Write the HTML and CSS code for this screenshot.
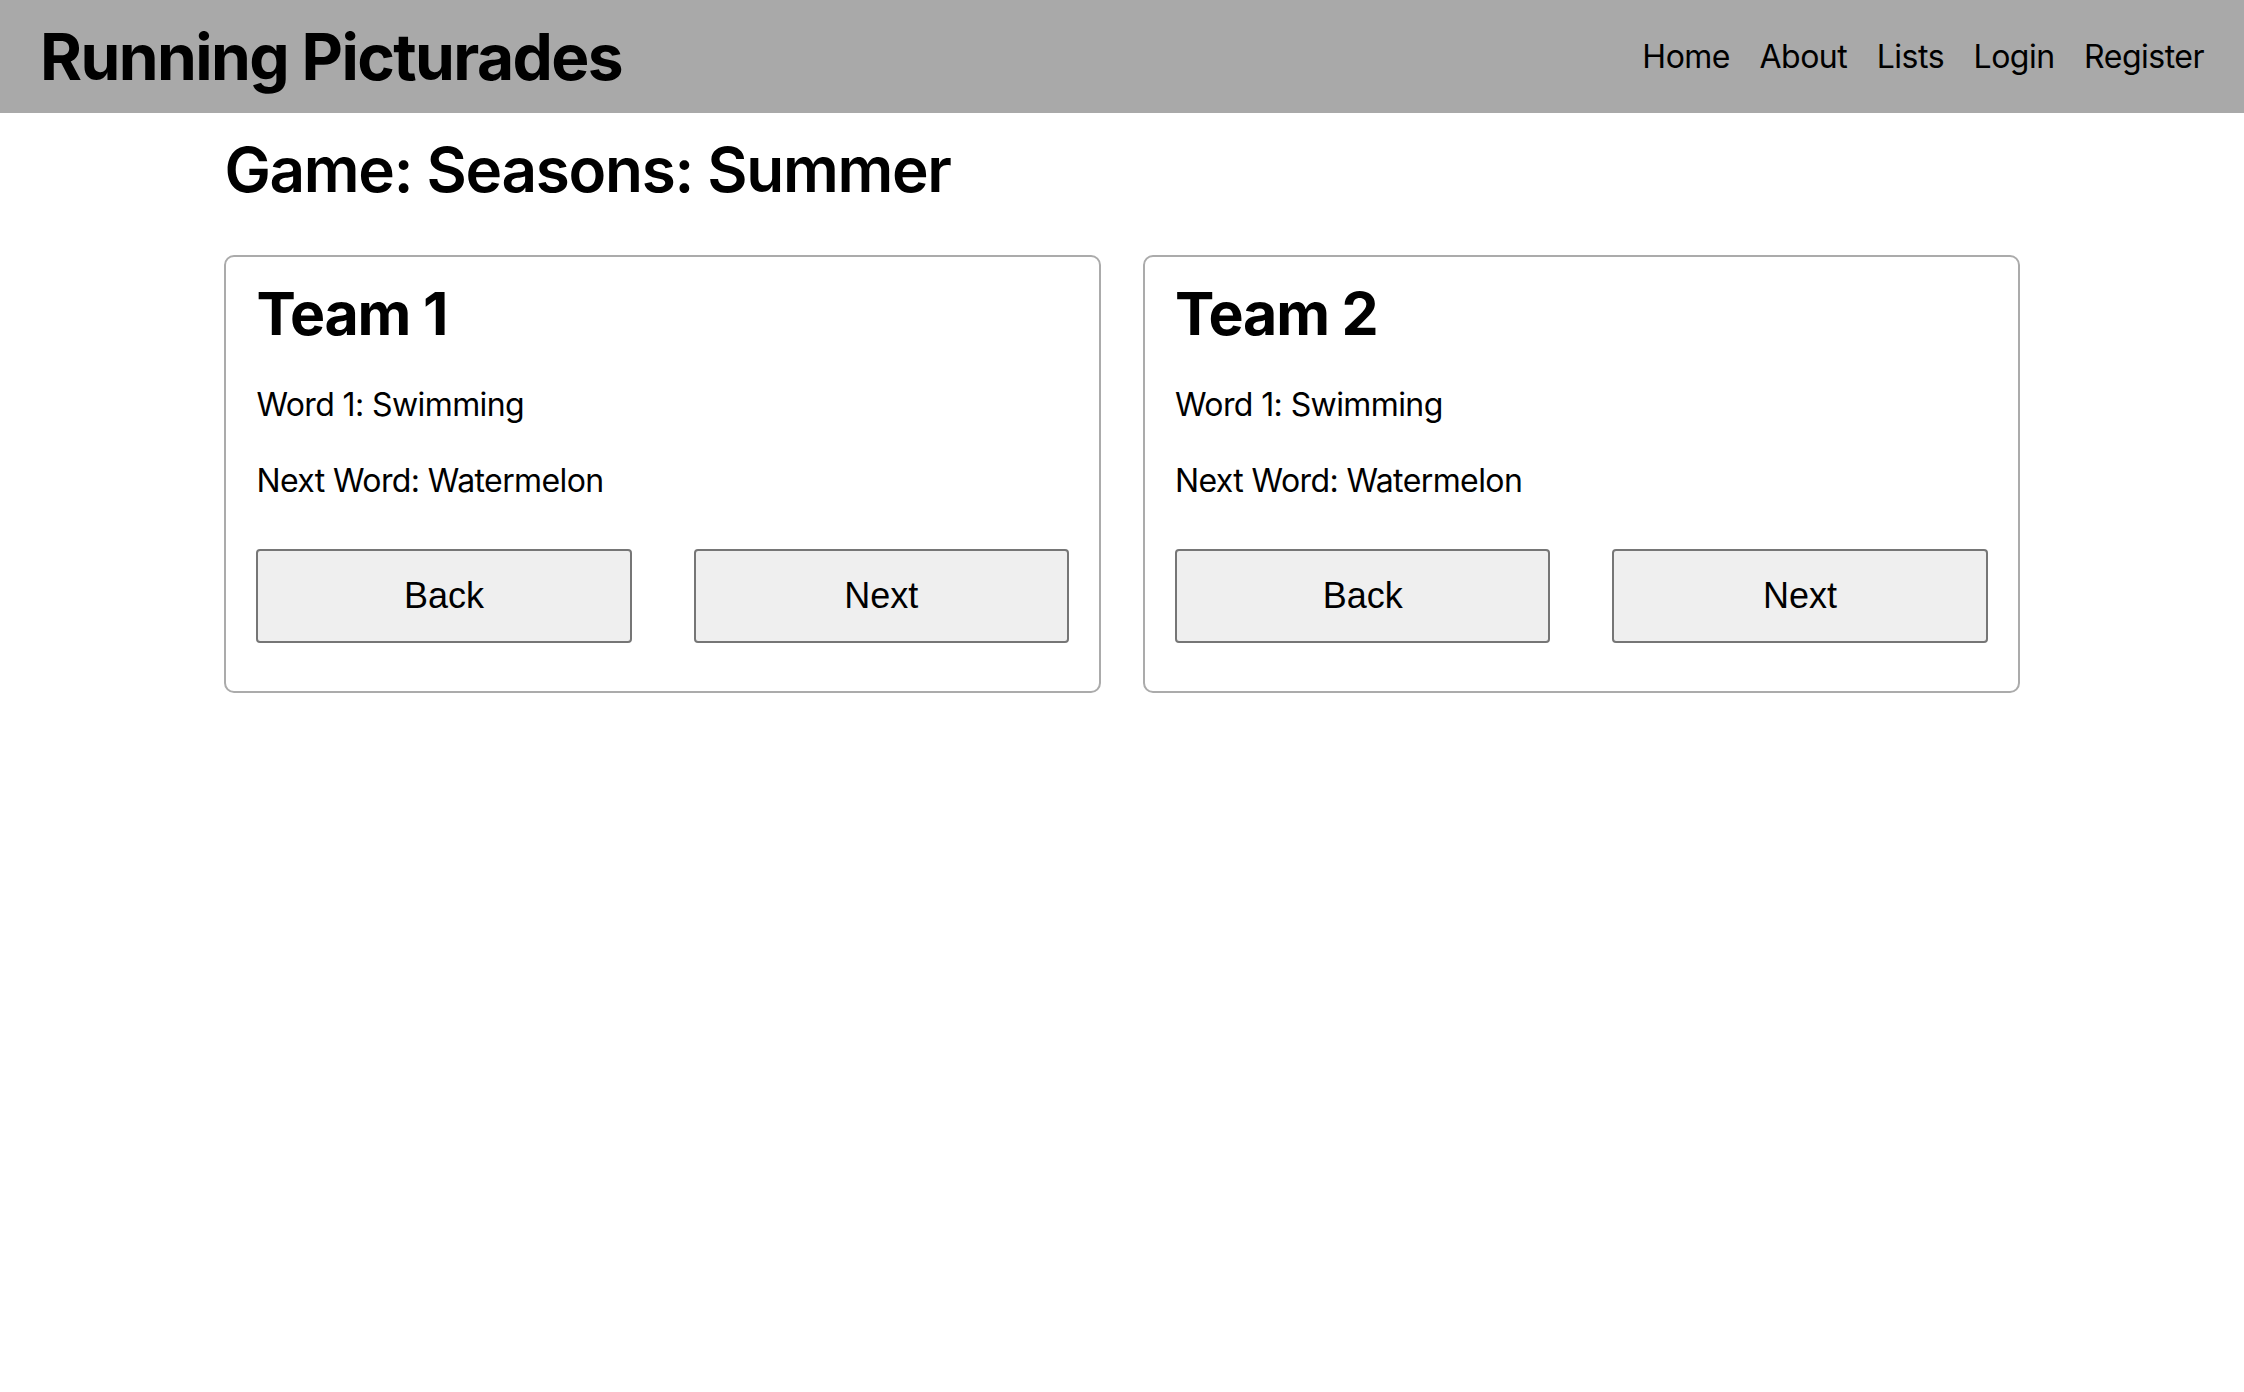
FILE: index.html
```html
<!DOCTYPE html>
<html lang="en">
<head>
<meta charset="utf-8">
<title>Running Picturades</title>
<link rel="stylesheet" href="styles.css">
</head>
<body>
<header class="topbar">
  <div class="brand">Running Picturades</div>
  <nav class="nav">
    <a href="#" class="nav-link">Home</a>
    <a href="#" class="nav-link">About</a>
    <a href="#" class="nav-link">Lists</a>
    <a href="#" class="nav-link">Login</a>
    <a href="#" class="nav-link">Register</a>
  </nav>
</header>
<main class="page">
  <h1 class="page-title">Game: Seasons: Summer</h1>
  <div class="teams">
    <section class="team-card">
      <h2 class="team-name">Team 1</h2>
      <p class="word">Word 1: Swimming</p>
      <p class="word">Next Word: Watermelon</p>
      <div class="controls">
        <button class="btn" type="button">Back</button>
        <button class="btn" type="button">Next</button>
      </div>
    </section>
    <section class="team-card">
      <h2 class="team-name">Team 2</h2>
      <p class="word">Word 1: Swimming</p>
      <p class="word">Next Word: Watermelon</p>
      <div class="controls">
        <button class="btn" type="button">Back</button>
        <button class="btn" type="button">Next</button>
      </div>
    </section>
  </div>
</main>
</body>
</html>
```
FILE: styles.css
```css
html, body {
  margin: 0;
  padding: 0;
  background: #ffffff;
}

body {
  font-family: Inter, "Noto Sans", "Liberation Sans", sans-serif;
  color: #000000;
}

.topbar {
  height: 113px;
  box-sizing: border-box;
  background: #a9a9a9;
  padding: 0 40px 0 40px;
  display: flex;
  align-items: center;
  justify-content: space-between;
}

.brand {
  font-size: 64px;
  font-weight: 700;
  line-height: 1;
  letter-spacing: -1.6px;
}

.nav {
  display: flex;
  gap: 29.5px;
}

.nav-link {
  font-size: 32px;
  color: #000000;
  text-decoration: none;
  line-height: 1;
  letter-spacing: -0.5px;
}

.page {
  width: 80%;
  margin: 0 auto;
}

.page-title {
  font-size: 62px;
  font-weight: 600;
  line-height: 75px;
  letter-spacing: -1.3px;
  margin: 19px 0 48px 0;
}

.teams {
  display: grid;
  grid-template-columns: 1fr 1fr;
  gap: 42px;
}

.team-card {
  border: 2px solid #ababab;
  border-radius: 10px;
  padding: 21px 30px 48px 30px;
}

.team-name {
  font-size: 59px;
  font-weight: 700;
  line-height: 71px;
  letter-spacing: -1.2px;
  margin: 0 0 36px 0;
}

.word {
  font-size: 32px;
  line-height: 40px;
  letter-spacing: -0.6px;
  margin: 0 0 36px 0;
}

.word + .word {
  margin-bottom: 48px;
}

.controls {
  display: grid;
  grid-template-columns: 1fr 1fr;
  gap: 62px;
}

.btn {
  height: 94px;
  font-family: "Liberation Sans", Arial, sans-serif;
  font-size: 36px;
  color: #000000;
  background: #efefef;
  border: 2px solid #767676;
  border-radius: 4px;
  padding: 0;
}
```
